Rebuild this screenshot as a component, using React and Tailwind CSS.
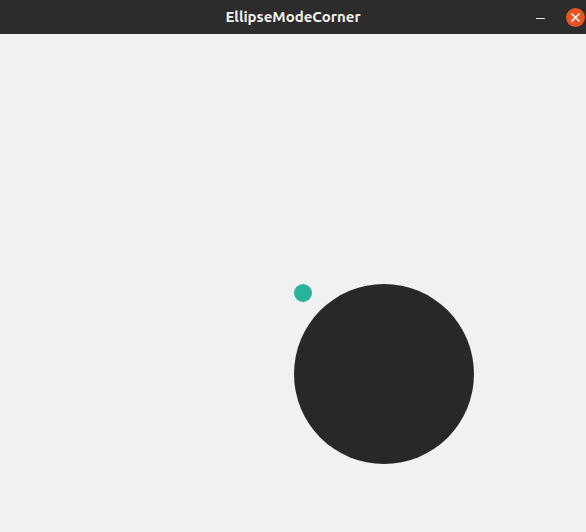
import React from 'react';

function TitleBar() {
  return (
    <div className="relative flex h-[34px] items-center justify-center bg-[#2c2c2c]">
      <span className="font-['Ubuntu','Noto_Sans',sans-serif] text-[15px] font-bold text-[#f2f2f2]">
        EllipseModeCorner
      </span>
      {/* window controls */}
      <div className="absolute right-[1px] top-0 flex h-[34px] items-center gap-[21px]">
        <div className="h-[1.5px] w-[9px] bg-[#e8e8e8] mt-[3px]" />
        <div className="flex h-[19px] w-[19px] items-center justify-center rounded-full bg-[#e95420] mr-[0px]">
          <svg width="9" height="9" viewBox="0 0 9 9">
            <path d="M1 1 L8 8 M8 1 L1 8" stroke="#fff" strokeWidth="1.6" strokeLinecap="round" />
          </svg>
        </div>
      </div>
    </div>
  );
}

export default function App() {
  return (
    <div className="flex h-[532px] w-[586px] flex-col bg-[#f1f1f1]">
      <TitleBar />
      {/* sketch canvas */}
      <div className="relative flex-1">
        <div className="absolute left-[294px] top-[250px] h-[180px] w-[180px] rounded-full bg-[#282828]" />
        <div className="absolute left-[294px] top-[250px] h-[18px] w-[18px] rounded-full bg-[#2ab39b]" />
      </div>
    </div>
  );
}
